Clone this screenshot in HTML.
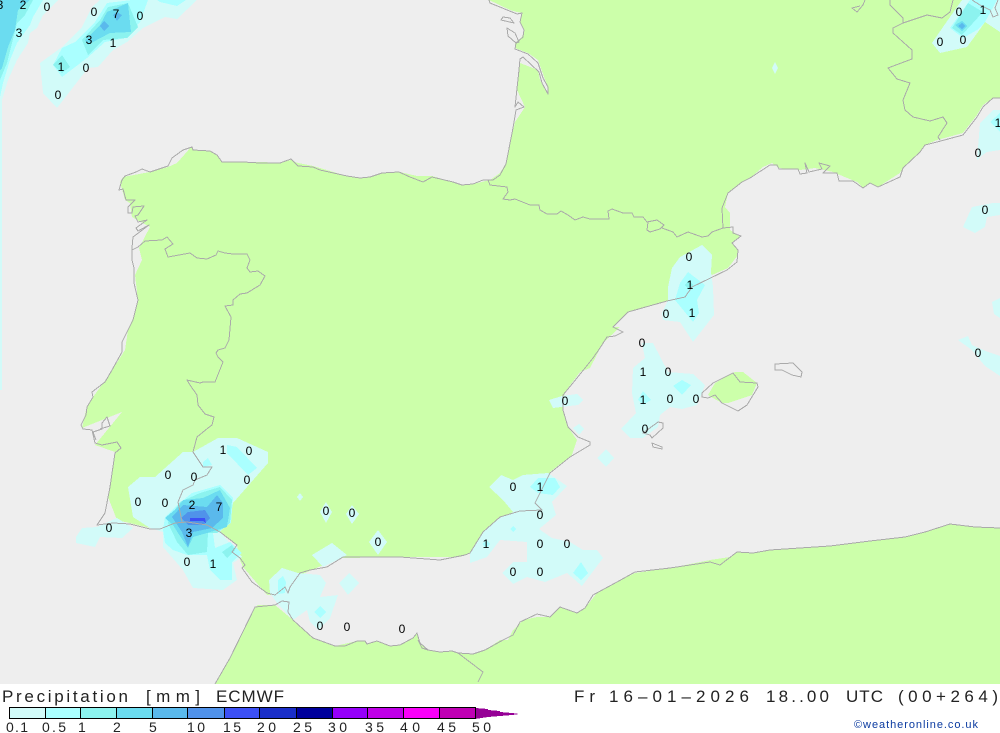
<!DOCTYPE html>
<html><head><meta charset="utf-8"><title>Precipitation ECMWF</title>
<style>html,body{margin:0;padding:0;background:#fff}svg{display:block}</style></head>
<body>
<svg width="1000" height="733" viewBox="0 0 1000 733" xmlns="http://www.w3.org/2000/svg">
<rect width="1000" height="684" fill="#eeeeee"/>
<g shape-rendering="crispEdges">
<!-- land -->
<path fill="#ccffaa" d="M489,0 L510,10 517,12 522,13 520,22 524,30 522,37 515,43 515,48 528,53 538,60 547,85 548,94 540,80 538,70 520,63 517,90 525,107 515,122 506,163 500,173 490,180 473,184 462,185 453,182 432,176 417,176 400,172 382,173 370,177 360,178 347,176 320,168 313,166 298,163 291,160 280,163 263,162 243,162 222,162 217,155 210,151 193,150 192,146 177,163 168,167 150,172 123,177 120,182 125,200 130,203 132,217 150,227 139,248 142,260 135,275 138,300 133,318 128,330 125,350 107,378 93,397 86,410 82,428 122,412 95,445 115,452 112,477 108,497 117,520 150,528 175,523 207,525 220,532 237,545 240,560 243,567 267,595 277,595 300,575 340,558 420,557 460,557 470,553 483,532 500,517 520,511 542,510 535,503 550,472 572,455 577,440 568,427 563,410 565,392 580,372 590,368 603,343 620,327 613,327 628,312 667,301 685,297 692,287 712,275 728,268 738,255 738,250 732,243 740,236 730,230 730,213 725,207 728,193 742,182 750,178 763,167 772,163 779,168 800,170 815,168 833,172 840,175 857,182 863,188 870,183 878,187 900,173 903,168 920,152 925,145 937,140 963,133 977,115 983,105 993,98 1000,98 L1000,0 Z"/>
<path fill="#ccffaa" d="M215,684 L230,658 255,607 258,605 275,605 293,620 313,638 335,646 357,641 365,641 367,644 377,641 390,646 400,645 413,638 417,633 420,643 428,650 440,652 452,651 458,653 473,654 485,650 500,640 508,640 513,630 523,620 537,617 550,617 560,607 577,613 585,608 597,593 617,582 635,573 670,568 710,560 730,557 737,552 753,553 770,550 800,548 830,546 870,541 905,537 925,532 950,524 975,527 1000,528 L1000,684 Z"/>
<path fill="#ccffaa" d="M708,395 L715,383 735,372 743,372 757,383 752,395 728,403 722,403 713,398 Z"/>
<!-- 0.1 -->
<g fill="#d2fbf9">
<path d="M128,487 L140,477 155,477 183,452 193,452 218,438 237,438 268,452 268,463 233,503 230,520 220,532 242,557 233,563 237,580 223,590 193,588 183,570 163,547 163,532 150,528 133,517 Z"/>
<path d="M76,537 L82,528 97,527 117,518 133,528 122,538 100,537 95,547 76,543 Z"/>
<path d="M297,497 L300,493 303,497 300,501 Z"/>
<path d="M320,512 L326,502 332,512 326,523 Z"/>
<path d="M346,514 L352,505 359,514 352,524 Z"/>
<path d="M369,542 L378,530 387,542 378,555 Z"/>
<path d="M312,555 L332,543 347,555 323,567 Z"/>
<path d="M269,580 L282,568 298,573 320,575 326,583 320,597 338,595 330,618 318,630 310,622 307,610 293,620 277,603 270,593 Z"/>
<path d="M339,583 L349,573 359,583 348,595 Z"/>
<path d="M489,487 L501,475 513,480 523,475 548,473 567,486 552,502 556,515 539,529 552,538 570,542 583,550 597,550 603,558 582,586 567,573 545,582 527,577 513,584 502,573 513,562 527,562 527,542 500,540 487,557 470,563 470,553 483,532 500,518 513,512 503,500 Z"/>
<path d="M549,400 L562,396 577,394 583,400 578,405 553,408 Z"/>
<path d="M573,428 L579,424 584,429 579,435 Z"/>
<path d="M597,458 L606,449 614,458 606,467 Z"/>
<path d="M672,268 L680,257 702,245 712,255 711,272 713,287 714,315 693,342 680,322 663,320 662,313 668,300 668,287 Z"/>
<path d="M642,343 L653,343 668,372 693,374 705,385 697,405 682,409 670,407 660,415 658,427 643,438 630,438 621,429 636,413 632,393 633,368 645,358 Z"/>
<path d="M40,63 L62,47 82,27 92,7 100,0 197,0 177,19 165,17 143,28 127,42 113,50 98,67 88,68 57,108 43,93 Z"/>
<path d="M0,0 L58,0 43,15 37,28 30,33 28,43 17,60 8,80 2,100 2,390 0,390 Z"/>
<path d="M932,43 L943,27 957,7 962,0 1000,0 L1000,32 985,22 978,32 967,47 940,53 Z"/>
<path d="M977,160 L980,123 993,110 1000,110 1000,150 987,152 980,157 Z"/>
<path d="M963,227 L972,207 993,203 1000,203 1000,215 987,217 985,227 975,233 Z"/>
<path d="M772,68 L775,62 778,68 775,74 Z"/>
<path d="M958,340 L968,336 972,345 988,352 1000,356 1000,376 985,366 972,350 Z"/>
<path d="M992,302 L1000,298 1000,318 994,314 Z"/>
</g>
<!-- 0.5 -->
<g fill="#aaffff">
<path d="M165,517 L177,505 192,493 220,485 233,498 231,523 217,533 213,533 215,548 230,542 242,553 232,562 232,580 220,580 210,570 207,555 187,555 173,550 165,543 163,530 Z"/>
<path d="M227,445 L237,447 257,468 248,475 227,453 Z"/>
<path d="M203,462 L208,458 212,465 203,467 Z"/>
<path d="M278,580 L283,576 286,582 285,593 278,594 Z"/>
<path d="M314,612 L320,606 326,612 320,618 Z"/>
<path d="M530,487 L538,478 555,478 560,487 553,495 538,493 Z"/>
<path d="M573,573 L581,562 588,573 581,580 Z"/>
<path d="M482,544 L486,540 490,544 486,548 Z"/>
<path d="M510,529 L513,526 516,529 513,532 Z"/>
<path d="M688,272 L705,285 697,300 699,313 693,322 675,300 680,283 Z"/>
<path d="M682,380 L691,385 682,395 673,386 Z"/>
<path d="M643,391 L651,400 643,405 638,400 Z"/>
<path d="M53,65 L62,48 75,42 95,22 107,3 132,0 148,0 140,22 125,38 105,42 87,58 62,77 Z"/>
<path d="M157,0 L160,2 177,6 186,0 Z"/>
<path d="M0,0 L43,0 33,17 30,25 17,43 10,60 3,83 0,97 Z"/>
<path d="M950,28 L970,0 997,0 990,13 985,22 977,30 963,38 Z"/>
<path d="M990,122 L1000,113 1000,132 Z"/>
</g>
<!-- 1 -->
<g fill="#8cf3ef">
<path d="M170,517 L180,502 200,493 220,487 232,500 230,523 217,533 208,533 207,552 188,555 177,542 168,523 Z"/>
<path d="M222,552 L232,545 235,550 227,558 Z"/>
<path d="M82,40 L100,20 108,7 128,3 138,27 127,38 103,40 88,55 Z"/>
<path d="M53,65 L62,55 70,67 62,73 Z"/>
<path d="M0,0 L33,0 25,15 17,23 12,43 7,63 0,80 Z"/>
<path d="M952,28 L968,3 983,12 962,35 Z"/>
<path d="M689,280 L693,285 689,290 685,285 Z"/>
</g>
<!-- 2 -->
<g fill="#6bdcf0">
<path d="M165,518 L177,508 183,500 203,498 220,490 230,508 227,527 207,533 193,537 188,548 178,533 173,525 Z"/>
<path d="M85,40 L100,25 107,12 128,3 131,32 110,33 93,42 88,45 Z"/>
<path d="M0,0 L30,0 18,10 15,30 8,47 2,68 0,70 Z"/>
<path d="M955,25 L962,21 967,26 962,31 Z"/>
</g>
<!-- 5 -->
<g fill="#5ab9ec">
<path d="M172,517 L183,505 207,507 217,495 223,503 223,518 212,528 193,532 188,547 182,532 Z"/>
<path d="M104,21 L109,26 104,31 100,26 Z"/>
<path d="M117,12 L122,15 117,21 113,15 Z"/>
<path d="M958,26 L962,23 965,26 962,29 Z"/>
</g>
<path fill="#5092ea" d="M181,518 L188,512 205,510 210,518 203,525 188,525 Z"/>
<path fill="#3c50f5" d="M190,518 L205,518 206,523 203,521 190,521 Z"/>
</g>
<!-- coast lines -->
<g fill="none" stroke="#aaaaaa" stroke-width="1" stroke-linejoin="round" shape-rendering="crispEdges">
<path d="M489,0 L490,3 517,14 522,13 520,22 524,30 523,37 516,43 515,49 528,54 538,63 543,78 548,87 548,94 542,83 539,72 523,57 520,59 519,70 515,107 518,102 524,107 516,110 513,128 506,164 500,175 493,180 483,180 473,184 462,185 453,182 432,177 423,182 410,177 399,172 382,173 370,177 360,178 347,176 320,170 313,167 298,166 291,159 280,163 260,163 243,162 222,162 217,155 210,151 193,150 192,147 183,150 172,158 168,166 150,172 142,169 136,172 125,176 122,180 119,190 123,189 126,200 135,200 128,207 128,213 132,213 133,207 144,206 138,215 135,216 138,222 147,220 136,228 138,231 149,225 133,237 132,248 132,260 134,268 134,283 138,300 133,320 128,330 122,342 122,352 112,370 105,382 92,392 93,397 87,407 86,415 81,425 83,429 92,430 95,443 102,445 117,442 121,448 115,453 110,487 105,513 97,525 113,523 130,524 150,529 160,529 175,523 187,522 207,525 220,532 237,545 232,552 240,558 245,565 242,568 252,582 267,593 275,595 285,587 288,593 290,587 300,573 310,570 327,567 343,557 360,557 400,557 440,560 465,555 470,553 483,532 500,517 520,511 542,510 535,503 550,473 570,457 590,445 590,442 578,437 568,427 563,410 563,395 577,378 593,358 600,348 607,337 615,336 623,332 613,327 628,312 667,301 685,297 692,287 727,270 737,262 738,250 732,243 741,236 733,233 733,227 723,228 722,208 728,193 742,182 750,178 770,165 777,165 779,169 798,169 800,174 807,173 805,163 809,172 822,169 819,163 830,166 823,173 837,173 839,181 853,181 863,188 870,183 878,187 900,177 903,168 920,152 925,145 937,142 963,135 977,117 983,107 993,98 1000,98"/>
<path d="M100,429 L110,426 107,417 102,423 102,429 93,432 96,440"/>
<path d="M503,17 L510,18 514,23 501,20 Z"/>
<path d="M507,28 L515,33 519,42 516,43 508,36 Z"/>
<path d="M488,180 L490,185 507,187 508,192 503,199 510,200 515,199 530,205 539,205 540,210 547,214 557,214 561,211 568,215 575,220 583,217 590,219 609,219 608,211 612,209 623,213 632,213 634,217 643,217 647,222 657,220 664,225 660,229 650,232 647,230 648,222 M662,228 L673,232 677,237 688,232 702,237 708,236 712,232 723,228 733,227"/>
<path d="M132,250 L138,247 145,241 162,240 167,237 173,244 165,249 168,257 190,253 197,258 207,259 216,255 218,251 225,253 233,254 247,254 250,260 247,268 250,272 258,271 265,276 260,285 247,293 240,294 233,300 233,305 225,306 231,317 229,340 225,348 218,350 216,353 218,357 223,362 215,382 203,382 200,383 187,380 190,385 197,395 198,405 205,414 214,417 212,425 208,428 197,437 193,452 203,467 212,467 207,475 195,480 193,485 183,490 178,502 182,522"/>
<path d="M890,0 L890,5 903,18 903,23 893,28 893,33 903,42 912,50 912,59 888,68 897,79 910,83 903,100 905,110 913,117 930,121 943,117 947,123 938,137 940,140"/>
<path d="M903,23 L927,15 942,18 950,12 953,0"/>
<path d="M972,0 L980,5 990,10 993,17 998,15 995,8 998,0"/>
<path d="M865,0 L863,5 857,12 852,8 860,6"/>
<path d="M702,397 L702,393 713,383 733,373 740,382 757,383 758,387 747,405 738,411 722,403 715,395 708,398 Z"/>
<path d="M775,364 L793,363 802,372 801,377 792,375 782,370 775,370 Z"/>
<path d="M643,433 L658,422 663,423 663,428 652,438 650,435 Z"/>
<path d="M652,443 L662,447 662,449 653,447 Z"/>
<path d="M215,684 L230,658 255,607 275,605 282,601 289,602 288,612 293,620 313,638 335,646 345,646 357,641 365,641 367,644 377,641 390,646 400,645 413,638 417,633 420,643 428,650 440,652 452,651 458,653 473,654 485,650 503,640 513,635 520,622 537,614 550,617 560,607 577,613 585,608 593,595 617,582 635,572 670,568 710,562 720,565 737,552 753,553 770,550 800,548 830,546 870,541 905,537 925,532 950,524 975,527 1000,528"/>
<path d="M418,640 L422,648 428,650"/>
<path d="M458,653 L483,672 478,682"/>
</g>
<rect y="684" width="1000" height="49" fill="#ffffff"/>
<!-- map numbers -->
<g font-family="'Liberation Sans',sans-serif" font-size="12" fill="#000" text-anchor="middle">
<text x="0" y="9">3</text><text x="23" y="9">2</text><text x="47" y="11">0</text><text x="94" y="16">0</text><text x="116" y="18">7</text><text x="140" y="20">0</text><text x="89" y="44">3</text><text x="113" y="47">1</text><text x="19" y="37">3</text><text x="61" y="71">1</text><text x="86" y="72">0</text><text x="58" y="99">0</text>
<text x="959" y="16">0</text><text x="983" y="14">1</text><text x="940" y="46">0</text><text x="963" y="44">0</text><text x="998" y="127">1</text><text x="978" y="157">0</text><text x="985" y="214">0</text><text x="978" y="357">0</text>
<text x="689" y="261">0</text><text x="690" y="289">1</text><text x="666" y="318">0</text><text x="692" y="317">1</text>
<text x="642" y="347">0</text><text x="643" y="376">1</text><text x="668" y="376">0</text><text x="643" y="404">1</text><text x="670" y="403">0</text><text x="696" y="403">0</text><text x="645" y="433">0</text><text x="565" y="405">0</text>
<text x="223" y="454">1</text><text x="249" y="455">0</text><text x="168" y="479">0</text><text x="194" y="481">0</text><text x="247" y="484">0</text><text x="138" y="506">0</text><text x="165" y="507">0</text><text x="192" y="509">2</text><text x="219" y="511">7</text><text x="109" y="532">0</text><text x="189" y="537">3</text><text x="187" y="566">0</text><text x="213" y="568">1</text>
<text x="326" y="515">0</text><text x="352" y="517">0</text><text x="378" y="546">0</text><text x="320" y="630">0</text><text x="347" y="631">0</text><text x="402" y="633">0</text>
<text x="513" y="491">0</text><text x="540" y="491">1</text><text x="540" y="519">0</text><text x="486" y="548">1</text><text x="540" y="548">0</text><text x="567" y="548">0</text><text x="513" y="576">0</text><text x="540" y="576">0</text>
</g>
<!-- header text -->
<g font-family="'Liberation Sans',sans-serif" fill="#222" font-size="17">
<text x="2" y="702" textLength="126" lengthAdjust="spacing">Precipitation</text>
<text x="146" y="702" textLength="54" lengthAdjust="spacing">[mm]</text>
<text x="216" y="702" textLength="68" lengthAdjust="spacing">ECMWF</text>
<text x="574" y="702" textLength="21" lengthAdjust="spacing">Fr</text>
<text x="609" y="702" textLength="140" lengthAdjust="spacing">16–01–2026</text>
<text x="766" y="702" textLength="63" lengthAdjust="spacing">18..00</text>
<text x="846" y="702" textLength="37" lengthAdjust="spacing">UTC</text>
<text x="898" y="702" textLength="100" lengthAdjust="spacing">(00+264)</text>
</g>
<!-- legend -->
<g shape-rendering="crispEdges">
<path fill="#960096" d="M475,708 L488,709 488,710 500,711 500,712 512,713 519,714 512,715 500,716 488,717 475,719 Z"/>
<g stroke="#000" stroke-width="1">
<rect x="9.5" y="707.5" width="36" height="11" fill="#d2fbf9"/>
<rect x="45.5" y="707.5" width="35" height="11" fill="#aaffff"/>
<rect x="80.5" y="707.5" width="36" height="11" fill="#8cf3ef"/>
<rect x="116.5" y="707.5" width="36" height="11" fill="#6bdcf0"/>
<rect x="152.5" y="707.5" width="35" height="11" fill="#5ab9ec"/>
<rect x="187.5" y="707.5" width="37" height="11" fill="#5092ea"/>
<rect x="224.5" y="707.5" width="35" height="11" fill="#3c50f5"/>
<rect x="259.5" y="707.5" width="37" height="11" fill="#1a2ec8"/>
<rect x="296.5" y="707.5" width="36" height="11" fill="#00009c"/>
<rect x="332.5" y="707.5" width="35" height="11" fill="#9600fa"/>
<rect x="367.5" y="707.5" width="36" height="11" fill="#c000e8"/>
<rect x="403.5" y="707.5" width="36" height="11" fill="#fa00fa"/>
<rect x="439.5" y="707.5" width="36" height="11" fill="#c000b4"/>
</g>
</g>
<g font-family="'Liberation Sans',sans-serif" font-size="14" fill="#222">
<text x="6" y="732" textLength="22" lengthAdjust="spacing">0.1</text>
<text x="42" y="732" textLength="24" lengthAdjust="spacing">0.5</text>
<text x="78" y="732">1</text>
<text x="113" y="732">2</text>
<text x="149" y="732">5</text>
<text x="187" y="732" textLength="18" lengthAdjust="spacing">10</text>
<text x="223" y="732" textLength="18" lengthAdjust="spacing">15</text>
<text x="257" y="732" textLength="19" lengthAdjust="spacing">20</text>
<text x="293" y="732" textLength="19" lengthAdjust="spacing">25</text>
<text x="328" y="732" textLength="19" lengthAdjust="spacing">30</text>
<text x="365" y="732" textLength="19" lengthAdjust="spacing">35</text>
<text x="400" y="732" textLength="20" lengthAdjust="spacing">40</text>
<text x="437" y="732" textLength="19" lengthAdjust="spacing">45</text>
<text x="472" y="732" textLength="19" lengthAdjust="spacing">50</text>
</g>
<text x="854" y="728" font-family="'Liberation Sans',sans-serif" font-size="11" fill="#0a3aa0" textLength="124" lengthAdjust="spacing">©weatheronline.co.uk</text>
</svg>
</body></html>
